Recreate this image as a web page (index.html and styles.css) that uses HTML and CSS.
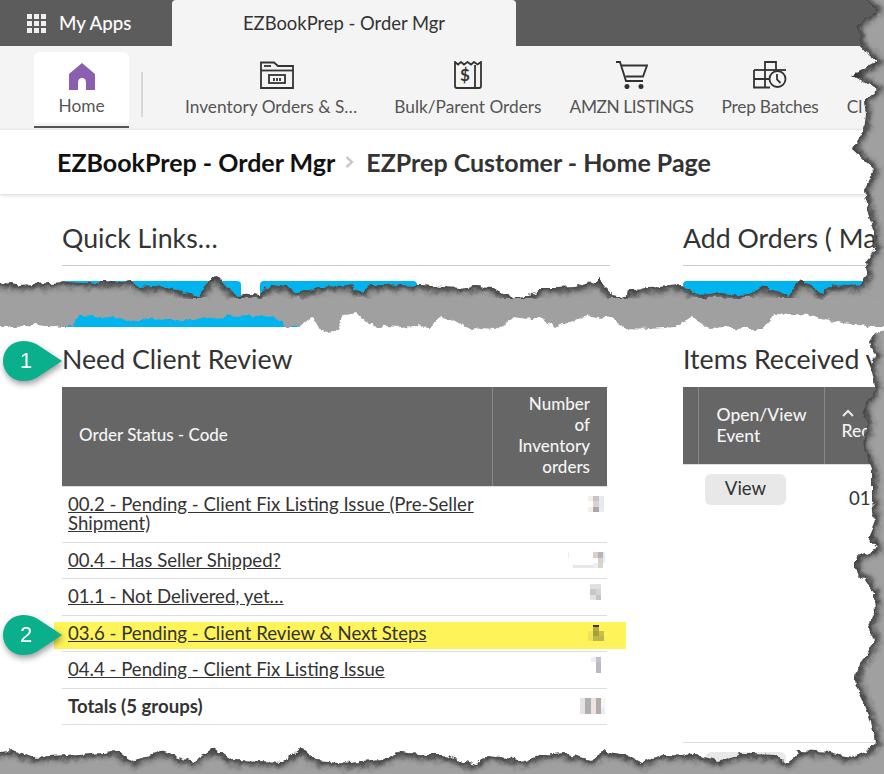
FILE: index.html
```html
<!DOCTYPE html>
<html lang="en">
<head>
    <meta charset="UTF-8">
    <meta name="viewport" content="width=device-width, initial-scale=1.0">
    <title>EZBookPrep - Order Mgr</title>
    <link rel="stylesheet" href="styles.css">
</head>
<body>
<div class="app">
    <header class="topbar">
        <div class="apps">
            <div class="waffle"><i></i><i></i><i></i><i></i><i></i><i></i><i></i><i></i><i></i></div>
            <span>My Apps</span>
        </div>
        <div class="tab">EZBookPrep - Order Mgr</div>
    </header>

    <nav class="nav">
        <a class="nav-item home">
            <svg width="28" height="28" viewBox="0 0 28 28"><path fill="#8a5fb0" d="M14 0 L27 11 V27 H18 V20 Q18 15 14 15 Q10 15 10 20 V27 H1 V11 Z"/></svg>
            <span>Home</span>
        </a>
        <div class="nav-divider"></div>
        <a class="nav-item inventory">
            <svg width="34" height="28" viewBox="0 0 34 28" fill="none" stroke="#333" stroke-width="1.8"><path d="M1 27 V1.500 H14 L18 5 H33 V27 Z"/><path d="M1 9.500 H33"/><path d="M4 5 H11"/><rect x="9" y="14" width="16" height="8"/><path d="M14 17 V20 M17 17 V20 M20 17 V20"/></svg>
            <span>Inventory Orders &amp; S…</span>
        </a>
        <a class="nav-item">
            <svg width="28" height="28" viewBox="0 0 28 28" fill="none" stroke="#333" stroke-width="1.8"><path d="M1 1 L4 3.500 L7 1 L10 3.500 L13.500 1 L17 3.500 L20 1 L23.500 3.500 L27 1 V25 Q27 27 25 27 H3 Q1 27 1 25 Z"/><path d="M21 4 V27"/><text x="11" y="20" class="icon-dollar">$</text></svg>
            <span>Bulk/Parent Orders</span>
        </a>
        <a class="nav-item amzn">
            <svg width="33" height="28" viewBox="0 0 33 28" fill="none" stroke="#333" stroke-width="1.9"><path d="M1 1 H5 L11 20 H28"/><path d="M7 4.500 H32 L28 15.500 H10.500" /><circle cx="12" cy="25.500" r="1.600" fill="#333"/><circle cx="26" cy="25.500" r="1.600" fill="#333"/></svg>
            <span>AMZN LISTINGS</span>
        </a>
        <a class="nav-item prep">
            <svg width="34" height="28" viewBox="0 0 34 28" fill="none" stroke="#333" stroke-width="1.8"><path d="M12 9 V1 H23 V9"/><path d="M1 9 H33"/><path d="M1 9 V26.500 H17"/><path d="M1 18 H16 M12 9 V26.500"/><circle cx="24.500" cy="18" r="8" fill="#f4f4f4"/><path d="M24 13 V18.500 L27.500 22"/></svg>
            <span>Prep Batches</span>
        </a>
        <a class="nav-item cut">
            <span>Cl</span>
        </a>
    </nav>

    <div class="breadcrumb">
        <strong class="crumb-app">EZBookPrep - Order Mgr</strong>
        <svg class="crumb-sep" width="9" height="12" viewBox="0 0 9 12" fill="none" stroke="#c8c8c8" stroke-width="2.400"><path d="M1.500 1 L7 6 L1.500 11"/></svg>
        <strong class="crumb-page">EZPrep Customer - Home Page</strong>
    </div>

    <main class="content">
        <section class="col-left">
            <h2 class="heading ruled">Quick Links…</h2>
            <div class="quick-links">
                <a class="quick-btn w1"></a>
                <a class="quick-btn w2"></a>
                <a class="quick-btn w3"></a>
            </div>
            <h2 class="heading marked">
                <span class="callout">
                    <svg width="62" height="40" viewBox="0 0 62 40"><path fill="#0aaf8c" d="M22 0 Q30 0 36 3.500 L61 20 L36 36.500 Q30 40 22 40 A20 20 0 0 1 22 0 Z"/></svg>
                    <b>1</b>
                </span>
                Need Client Review
            </h2>
            <table class="grid review">
                <thead>
                    <tr>
                        <th>Order Status - Code</th>
                        <th class="num">Number<br>of<br>Inventory<br>orders</th>
                    </tr>
                </thead>
                <tbody>
                    <tr>
                        <td><a href="#">00.2 - Pending - Client Fix Listing Issue (Pre-Seller Shipment)</a></td>
                        <td class="count">
                            <svg class="blur" width="40" height="16"><g shape-rendering="crispEdges"><rect x="20" width="6" height="5" fill="#f5ecea"/><rect x="25" width="6" height="5" fill="#c8c4c4"/><rect x="31" width="5" height="5" fill="#e4e9f2"/><rect x="25" y="5" width="6" height="6" fill="#d8d4d0"/><rect x="31" y="5" width="5" height="6" fill="#e4eaf2"/><rect x="20" y="11" width="5" height="5" fill="#f3efe9"/><rect x="25" y="11" width="6" height="5" fill="#aaa8a8"/><rect x="31" y="11" width="5" height="5" fill="#e9edf3"/></g></svg>
                        </td>
                    </tr>
                    <tr>
                        <td><a href="#">00.4 - Has Seller Shipped?</a></td>
                        <td class="count">
                            <svg class="blur" width="40" height="16"><g shape-rendering="crispEdges"><rect x="0" y="0" width="1" height="6" fill="#eee"/><rect x="25" width="5" height="6" fill="#e0ccc4"/><rect x="30" width="5" height="6" fill="#b0b6bc"/><rect x="35" width="2" height="6" fill="#e0eef8"/><rect x="30" y="6" width="5" height="5" fill="#dccfc6"/><rect x="35" y="6" width="2" height="5" fill="#e2f0fa"/><rect x="5" y="13" width="20" height="3" fill="#e8e6e4"/><rect x="25" y="11" width="5" height="5" fill="#eee"/><rect x="30" y="11" width="5" height="5" fill="#d8d4d0"/></g></svg>
                        </td>
                    </tr>
                    <tr>
                        <td><a href="#">01.1 - Not Delivered, yet…</a></td>
                        <td class="count">
                            <svg class="blur" width="40" height="16"><g shape-rendering="crispEdges"><rect x="22" width="11" height="5" fill="#e0e0e0"/><rect x="22" y="5" width="6" height="6" fill="#c8c8c8"/><rect x="28" y="5" width="5" height="6" fill="#d4d4d4"/><rect x="22" y="11" width="6" height="5" fill="#e2e2e2"/><rect x="28" y="11" width="5" height="5" fill="#c4c4c4"/></g></svg>
                        </td>
                    </tr>
                    <tr class="flagged">
                        <td>
                            <span class="highlight"></span>
                            <span class="callout second">
                                <svg width="62" height="40" viewBox="0 0 62 40"><path fill="#0aaf8c" d="M22 0 Q30 0 36 3.500 L61 20 L36 36.500 Q30 40 22 40 A20 20 0 0 1 22 0 Z"/></svg>
                                <b>2</b>
                            </span>
                            <a href="#">03.6 - Pending - Client Review &amp; Next Steps</a>
                        </td>
                        <td class="count">
                            <svg class="blur" width="40" height="16"><g shape-rendering="crispEdges"><rect x="25" width="6" height="2" fill="#3a3828"/><rect x="25" y="2" width="6" height="4" fill="#b8ac40"/><rect x="25" y="6" width="6" height="5" fill="#a8a038"/><rect x="20" y="6" width="5" height="5" fill="#efe658"/><rect x="31" y="6" width="5" height="5" fill="#c8c04a"/><rect x="20" y="11" width="5" height="5" fill="#ece458"/><rect x="25" y="11" width="11" height="5" fill="#bdb648"/></g></svg>
                        </td>
                    </tr>
                    <tr>
                        <td><a href="#">04.4 - Pending - Client Fix Listing Issue</a></td>
                        <td class="count">
                            <svg class="blur" width="40" height="16"><g shape-rendering="crispEdges"><rect x="23" width="5" height="5" fill="#eeeeee"/><rect x="28" width="5" height="5" fill="#c4c0cc"/><rect x="28" y="5" width="5" height="11" fill="#bcb8c8"/></g></svg>
                        </td>
                    </tr>
                    <tr class="totals">
                        <td>Totals (5 groups)</td>
                        <td class="count">
                            <svg class="blur" width="40" height="16"><g shape-rendering="crispEdges"><rect x="12" width="5" height="16" fill="#e6e2e0"/><rect x="17" width="6" height="16" fill="#b0aeae"/><rect x="23" width="5" height="16" fill="#ece4e0"/><rect x="28" width="5" height="16" fill="#b4aca8"/><rect x="33" width="4" height="10" fill="#f4f6f8"/><rect x="33" y="10" width="4" height="6" fill="#e2eef6"/></g></svg>
                        </td>
                    </tr>
                </tbody>
            </table>
        </section>

        <section class="col-right">
            <h2 class="heading ruled">Add Orders ( Ma</h2>
            <div class="quick-links">
                <a class="quick-btn wide"></a>
            </div>
            <h2 class="heading marked">Items Received v</h2>
            <table class="grid events">
                <thead>
                    <tr>
                        <th class="stub"></th>
                        <th class="open">Open/View<br>Event</th>
                        <th class="received">
                            <svg width="12" height="8" viewBox="0 0 12 8" fill="none" stroke="#e8e8e8" stroke-width="2"><path d="M1 7 L6 2 L11 7"/></svg>
                            Rec
                        </th>
                    </tr>
                </thead>
                <tbody>
                    <tr class="tall">
                        <td colspan="2"><a class="btn">View</a></td>
                        <td class="date">01</td>
                    </tr>
                    <tr>
                        <td colspan="2"><a class="btn"></a></td>
                        <td></td>
                    </tr>
                </tbody>
            </table>
        </section>
    </main>

    <!-- torn paper edges from the screenshot tool -->
    <svg class="torn" width="884" height="774" viewBox="0 0 884 774">
        <defs>
            <filter id="soft" x="-5%" y="-5%" width="110%" height="110%"><feGaussianBlur stdDeviation="3"/></filter>
            <filter id="rough" x="0" y="0" width="100%" height="100%">
                <feTurbulence type="fractalNoise" baseFrequency="0.12" numOctaves="3" seed="7" result="noise"/>
                <feDisplacementMap in="SourceGraphic" in2="noise" scale="7" xChannelSelector="R" yChannelSelector="G"/>
            </filter>
            <clipPath id="bandClip"><path d="M-9 282 L4 284 L10 283 L22 285 L33 284 L50 283 L67 282 L84 283 L100 282 L116 282 L130 280 L140 287 L152 286 L167 287 L177 290 L187 292 L200 297 L206 286 L210 278 L217 277 L222 282 L227 288 L240 296 L250 294 L260 295 L267 288 L273 285 L287 287 L297 293 L308 290 L320 287 L335 286 L350 285 L362 293 L370 285 L385 285 L400 284 L420 285 L442 287 L459 288 L475 286 L492 287 L502 293 L512 297 L529 296 L539 288 L556 288 L575 287 L590 283 L599 278 L605 287 L612 295 L622 297 L632 289 L650 288 L668 286 L682 285 L690 290 L699 295 L719 293 L735 294 L749 295 L762 286 L776 291 L790 296 L800 278 L811 286 L822 293 L832 285 L850 286 L865 285 L894 287 L894 327 L875 327 L842 323 L825 319 L809 315 L790 314 L775 313 L762 329 L742 329 L725 327 L709 328 L700 322 L692 316 L684 322 L675 327 L650 329 L624 328 L612 316 L598 318 L585 316 L570 322 L555 327 L539 317 L527 319 L514 317 L505 325 L495 330 L480 329 L465 327 L452 320 L442 316 L430 327 L415 326 L400 327 L370 325 L357 313 L343 315 L337 330 L328 333 L320 330 L313 317 L300 327 L287 326 L273 317 L260 316 L247 315 L227 317 L207 318 L193 321 L180 320 L163 320 L147 318 L127 322 L113 316 L103 318 L93 315 L80 316 L72 327 L63 327 L48 326 L33 325 L16 327 L-9 327 Z"/></clipPath>
            <clipPath id="frameClip"><path d="M855 -9 L868 4 L877 10 L857 25 L860 45 L869 55 L877 62 L852 75 L877 90 L864 100 L866 115 L864 130 L852 150 L874 170 L864 190 L869 213 L872 222 L875 250 L865 262 L868 275 L855 290 L894 300 L894 327 L875 333 L869 343 L875 357 L870 367 L875 390 L862 410 L868 425 L862 445 L872 470 L872 500 L874 523 L868 537 L877 548 L855 558 L855 570 L865 580 L874 593 L875 613 L867 627 L875 640 L868 653 L860 663 L855 680 L860 693 L868 713 L875 737 L876 743 L868 750 L852 757 L841 755 L830 752 L799 750 L795 757 L787 763 L776 755 L750 754 L740 754 L720 761 L696 755 L664 754 L642 763 L630 756 L605 751 L590 760 L565 753 L540 755 L525 761 L488 755 L475 765 L442 755 L427 755 L400 752 L383 760 L350 763 L316 760 L300 748 L283 762 L233 760 L213 748 L193 762 L160 751 L133 762 L117 751 L67 755 L33 757 L13 750 L-9 752 L-9 784 L894 784 L894 -9 Z"/></clipPath>
        </defs>
        <g filter="url(#rough)">
            <g clip-path="url(#bandClip)">
                <rect x="-10" y="270" width="910" height="70" fill="#a0a0a0"/>
                <path filter="url(#soft)" fill="none" stroke="#2b2b2b" stroke-width="7" d="M-9 282 L4 284 L10 283 L22 285 L33 284 L50 283 L67 282 L84 283 L100 282 L116 282 L130 280 L140 287 L152 286 L167 287 L177 290 L187 292 L200 297 L206 286 L210 278 L217 277 L222 282 L227 288 L240 296 L250 294 L260 295 L267 288 L273 285 L287 287 L297 293 L308 290 L320 287 L335 286 L350 285 L362 293 L370 285 L385 285 L400 284 L420 285 L442 287 L459 288 L475 286 L492 287 L502 293 L512 297 L529 296 L539 288 L556 288 L575 287 L590 283 L599 278 L605 287 L612 295 L622 297 L632 289 L650 288 L668 286 L682 285 L690 290 L699 295 L719 293 L735 294 L749 295 L762 286 L776 291 L790 296 L800 278 L811 286 L822 293 L832 285 L850 286 L865 285 L894 287"/>
            </g>
            <g clip-path="url(#frameClip)">
                <rect x="-10" y="-10" width="910" height="800" fill="#a0a0a0"/>
                <path filter="url(#soft)" fill="none" stroke="#2b2b2b" stroke-width="7" d="M855 -9 L868 4 L877 10 L857 25 L860 45 L869 55 L877 62 L852 75 L877 90 L864 100 L866 115 L864 130 L852 150 L874 170 L864 190 L869 213 L872 222 L875 250 L865 262 L868 275 L855 290 M875 333 L869 343 L875 357 L870 367 L875 390 L862 410 L868 425 L862 445 L872 470 L872 500 L874 523 L868 537 L877 548 L855 558 L855 570 L865 580 L874 593 L875 613 L867 627 L875 640 L868 653 L860 663 L855 680 L860 693 L868 713 L875 737 L876 743 L868 750 L852 757 L841 755 L830 752 L799 750 L795 757 L787 763 L776 755 L750 754 L740 754 L720 761 L696 755 L664 754 L642 763 L630 756 L605 751 L590 760 L565 753 L540 755 L525 761 L488 755 L475 765 L442 755 L427 755 L400 752 L383 760 L350 763 L316 760 L300 748 L283 762 L233 760 L213 748 L193 762 L160 751 L133 762 L117 751 L67 755 L33 757 L13 750 L-9 752"/>
            </g>
        </g>
    </svg>
</div>
</body>
</html>
```

FILE: styles.css
```css
* {
    box-sizing: border-box;
}
body {
    margin: 0;
    font-family: 'Lato', 'Liberation Sans', sans-serif;
    color: #333;
    background: #fff;
}
.app {
    position: relative;
    width: 884px;
    height: 774px;
    overflow: hidden;
}
.topbar {
    display: flex;
    height: 46px;
    background: #5c5c5c;
}
.apps {
    display: flex;
    align-items: center;
    gap: 13px;
    width: 172px;
    padding-left: 27px;
    color: #fff;
    font-size: 18.700px;
    font-weight: 500;
}
.waffle {
    display: grid;
    grid-template-columns: repeat(3, 5px);
    gap: 2px;
}
.waffle i {
    height: 5px;
    background: #f0f0f0;
}
.tab {
    width: 344px;
    padding-top: 12px;
    background: #f4f4f4;
    border-radius: 4px 4px 0 0;
    font-size: 18.400px;
    text-align: center;
}
.nav {
    display: flex;
    height: 84px;
    padding: 6px 0 0 34px;
    background: #f4f4f4;
    white-space: nowrap;
}
.nav-item {
    flex-shrink: 0;
    display: flex;
    flex-direction: column;
    align-items: center;
    gap: 7px;
    padding: 9px 14px 0;
    font-size: 17.300px;
    color: #555;
}
.nav-item.home {
    width: 95px;
    height: 76px;
    padding: 11px 0 0;
    gap: 4px;
    background: #fff;
    border-radius: 6px 6px 0 0;
    border-bottom: 2px solid #555;
    box-shadow: inset 0 -3px 0 #f4f4f4;
}
.nav-item.inventory {
    margin-right: 9px;
}
.nav-item.inventory svg {
    margin-left: 11px;
}
.nav-item.amzn span {
    letter-spacing: -0.4px;
}
.nav-item.prep span {
    letter-spacing: -0.2px;
}
.nav-item.cut {
    padding-top: 44px;
}
.nav-divider {
    flex-shrink: 0;
    width: 2px;
    height: 45px;
    margin: 20px 28px 0 12px;
    background: #d8d8d8;
}
.icon-dollar {
    font-family: 'Lato', sans-serif;
    font-size: 17px;
    font-weight: 700;
    fill: #333;
    stroke: none;
    text-anchor: middle;
}
.breadcrumb {
    display: flex;
    align-items: center;
    height: 64px;
    padding-left: 57px;
    background: #fff;
    box-shadow: 0 1px 4px rgba(0, 0, 0, 0.18);
    font-size: 25px;
    position: relative;
}
.crumb-app {
    color: #111;
}
.crumb-sep {
    margin: 0 12px 0 10px;
}
.crumb-page {
    color: #333;
}
.content {
    display: grid;
    grid-template-columns: 548px 560px;
    gap: 73px;
    padding-left: 62px;
}
.heading {
    margin: 0;
    font-size: 26.700px;
    font-weight: 400;
    line-height: 36px;
    padding-bottom: 9px;
    white-space: nowrap;
}
.heading.ruled {
    margin-top: 26px;
    border-bottom: 1px solid #ccc;
}
.heading.marked {
    position: relative;
    margin-top: 15px;
    line-height: 34px;
    padding-bottom: 11px;
}
.quick-links {
    display: flex;
    flex-wrap: wrap;
    gap: 4px 19px;
    margin-top: 15px;
}
.quick-btn {
    height: 21px;
    border-radius: 4px;
    background: #00b4ef;
}
.quick-btn.w1 {
    width: 179px;
}
.quick-btn.w2 {
    width: 157px;
}
.quick-btn.w3 {
    width: 238px;
}
.quick-btn.wide {
    width: 560px;
    height: 24px;
    margin-bottom: 22px;
}
.grid {
    border-collapse: collapse;
    font-size: 18.600px;
}
.grid th {
    background: #666;
    color: #f4f4f4;
    font-size: 17.500px;
    font-weight: 500;
    line-height: 21px;
    text-align: left;
    border-right: 1px solid #888;
    border-bottom: 1px solid #ddd;
}
.review {
    width: 545px;
}
.review th {
    height: 99px;
    padding: 5px 17px 9px;
    font-size: 17px;
}
.review th.num {
    width: 115px;
    padding: 5px 17px 7px;
    text-align: right;
    border-right: 0;
}
.review td {
    position: relative;
    padding: 8px 0 8px 6px;
    line-height: 19px;
    border-bottom: 1px solid #ddd;
    vertical-align: middle;
}
.review tbody tr:first-child td,
.review tbody tr:nth-child(3) td,
.review tbody tr:nth-child(5) td {
    padding-bottom: 9px;
}
.review a {
    position: relative;
    color: #333;
    text-decoration: underline;
}
.review td.count {
    padding: 0;
}
.blur {
    position: relative;
    display: block;
    margin-left: auto;
    margin-right: -1px;
}
.review tbody tr:first-child td.count {
    vertical-align: top;
    padding-top: 9px;
}
.totals td {
    font-weight: 700;
}
.highlight {
    position: absolute;
    left: -8px;
    top: 6px;
    width: 572px;
    height: 27px;
    background: #fff35a;
}
.callout {
    position: absolute;
    left: -61px;
    top: -1px;
    width: 62px;
    height: 40px;
    filter: drop-shadow(1px 3px 3px rgba(0, 0, 0, 0.4));
}
.callout svg {
    display: block;
}
.callout b {
    position: absolute;
    left: 0;
    top: 0;
    width: 50px;
    font-family: 'Liberation Sans', sans-serif;
    font-size: 22px;
    font-weight: 400;
    line-height: 40px;
    text-align: center;
    color: #fff;
}
.events {
    width: 560px;
    table-layout: fixed;
}
.events th {
    height: 77px;
    padding-bottom: 2px;
}
.events .stub {
    width: 15px;
}
.events .open {
    width: 126px;
    padding-left: 18px;
}
.events .received {
    padding-left: 17px;
    line-height: 20px;
}
.events .received svg {
    display: block;
    margin-bottom: 4px;
}
.events td {
    padding: 9px 0 0 22px;
    vertical-align: top;
    border-bottom: 1px solid #ddd;
}
.events .tall {
    height: 278px;
}
.events .date {
    padding: 22px 0 0 25px;
}
.btn {
    display: block;
    width: 81px;
    height: 31px;
    border-radius: 6px;
    background: #e8e8e8;
    color: #333;
    line-height: 29px;
    text-align: center;
}
.torn {
    position: absolute;
    left: 0;
    top: 0;
    pointer-events: none;
}
```
